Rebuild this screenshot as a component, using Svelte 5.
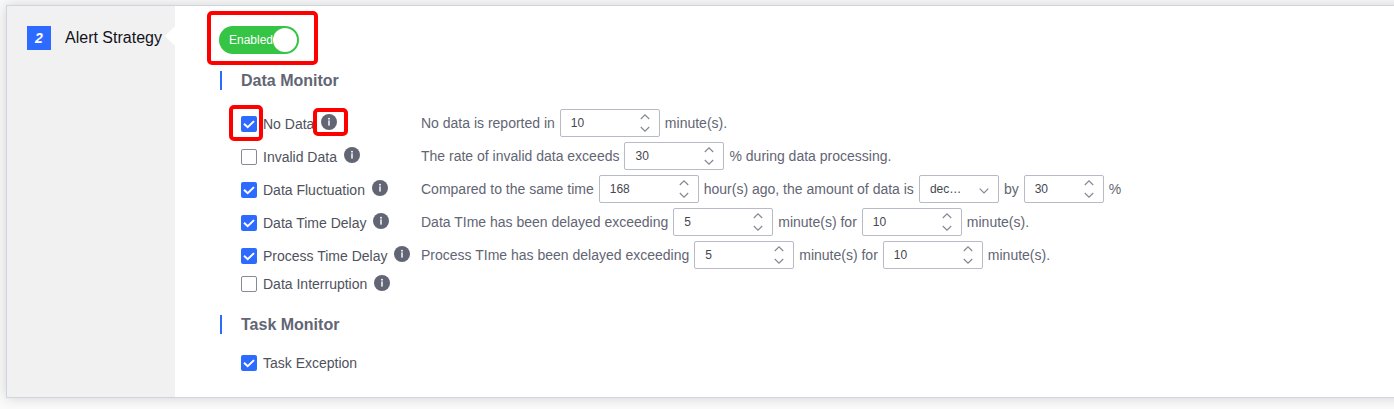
<script>
  const rows = [
    { label: 'No Data', checked: true, parts: [['t', 'No data is reported in'], ['n', '10'], ['t', 'minute(s).']] },
    { label: 'Invalid Data', checked: false, parts: [['t', 'The rate of invalid data exceeds'], ['n', '30'], ['t', '% during data processing.']] },
    {
      label: 'Data Fluctuation', checked: true,
      parts: [['t', 'Compared to the same time'], ['n', '168'], ['t', 'hour(s) ago, the amount of data is'], ['s', 'dec…'], ['t', 'by'], ['m', '30'], ['t', '%']]
    },
    { label: 'Data Time Delay', checked: true, parts: [['t', 'Data TIme has been delayed exceeding'], ['n', '5'], ['t', 'minute(s) for'], ['n', '10'], ['t', 'minute(s).']] },
    { label: 'Process Time Delay', checked: true, parts: [['t', 'Process TIme has been delayed exceeding'], ['n', '5'], ['t', 'minute(s) for'], ['n', '10'], ['t', 'minute(s).']] },
    { label: 'Data Interruption', checked: false, parts: [] }
  ];
</script>

{#snippet check(label, on, info, short)}
  <div class="check" class:short>
    <span class="box" class:on>
      {#if on}
        <svg width="16" height="16" viewBox="0 0 16 16"><path d="M3 7.7 L6.7 11.2 L13 5.1" fill="none" stroke="#fff" stroke-width="2" /></svg>
      {/if}
    </span>
    <span class="label">{label}</span>
    {#if info}
      <svg class="info" width="16" height="16" viewBox="0 0 16 16">
        <circle cx="8" cy="8" r="8" fill="#626573" />
        <rect x="7" y="3.9" width="2" height="1.6" fill="#e8e8ea" />
        <rect x="7" y="6.4" width="2" height="5.2" fill="#d4d5da" />
      </svg>
    {/if}
  </div>
{/snippet}

<main>
  <section class="card">
    <aside>
      <span class="step">2</span>
      <span class="title">Alert Strategy</span>
      <i class="notch"></i>
    </aside>
    <div class="content">
      <div class="switch"><span>Enabled</span><b></b></div>
      <h2>Data Monitor</h2>
      <div class="rows">
        {#each rows as row}
          <div class="row">
            {@render check(row.label, row.checked, true, !row.parts.length)}
            <div class="rule">
              {#each row.parts as [kind, text]}
                {#if kind === 't'}
                  <span class="text">{text}</span>
                {:else}
                  <div class="field" class:small={kind !== 'n'}>
                    <span>{text}</span>
                    {#if kind === 's'}
                      <svg class="arrow" width="10" height="6" viewBox="0 0 10 6"><path d="M.7 .7 L5 5 L9.3 .7" /></svg>
                    {:else}
                      <svg width="10" height="18" viewBox="0 0 10 18"><path d="M.8 5 L5 .9 L9.2 5 M.8 13 L5 17.1 L9.2 13" /></svg>
                    {/if}
                  </div>
                {/if}
              {/each}
            </div>
          </div>
        {/each}
      </div>
      <h2 class="task">Task Monitor</h2>
      <div class="exception">{@render check('Task Exception', true, false, false)}</div>
    </div>
  </section>
  <i class="mark toggle-mark"></i>
  <i class="mark check-mark"></i>
  <i class="mark info-mark"></i>
</main>

<style>
  :global(body) { background: #fafafa; }
  main {
    position: relative;
    box-sizing: border-box;
    width: 1394px;
    height: 409px;
    padding: 5px 0 0 6px;
    overflow: hidden;
    font-family: "Liberation Sans", Arial, sans-serif;
    font-size: 14px;
    color: #626573;
  }
  .card {
    display: flex;
    box-sizing: border-box;
    width: 1400px;
    height: 393px;
    border: 1px solid #cfd5df;
    background: #fff;
    box-shadow: 0 0 12px rgba(0, 0, 0, .16);
  }
  aside {
    position: relative;
    display: flex;
    box-sizing: border-box;
    width: 168px;
    flex: none;
    padding: 20px 0 0 20px;
    background: #f1f1f1;
  }
  .step {
    width: 24px;
    height: 24px;
    margin-right: 14px;
    background: #2d6aff;
    color: #fff;
    font: italic bold 14px/25px "Liberation Sans", Arial, sans-serif;
    text-align: center;
  }
  .title { font-size: 16px; line-height: 23px; color: #11131c; white-space: nowrap; }
  .notch {
    position: absolute;
    top: 20px;
    right: 0;
    border: solid transparent;
    border-width: 10px 10px 10px 0;
    border-right-color: #fff;
  }
  .content { padding: 20px 0 0 44px; }
  .switch {
    display: flex;
    align-items: center;
    justify-content: space-between;
    box-sizing: border-box;
    width: 80px;
    height: 28px;
    padding: 0 2px 0 10px;
    border-radius: 14px;
    background: #36c445;
    color: #fff;
    font-size: 12px;
  }
  .switch b { flex: none; width: 24px; height: 24px; border-radius: 50%; background: #fff; }
  h2 {
    height: 19px;
    margin: 17px 0 19px 1px;
    padding-left: 19px;
    border-left: 2px solid #2d6aff;
    font-size: 16px;
    line-height: 19px;
    color: #626573;
  }
  .rows { display: flex; flex-direction: column; gap: 5px; padding-left: 22px; }
  .row { display: flex; }
  .check { display: flex; align-items: center; box-sizing: border-box; width: 180px; height: 28px; padding-top: 2px; }
  .check.short { height: 20px; padding-top: 0; }
  .box { box-sizing: border-box; width: 16px; height: 16px; margin-right: 6px; border: 1px solid #878a96; border-radius: 2px; background: #fff; }
  .box.on { border: 0; background: #2d6aff; }
  .box svg { display: block; }
  .label { color: #4f525c; white-space: nowrap; line-height: 20px; }
  .info { margin: -4px 0 0 7px; }
  .short .info { margin-top: -2px; }
  .rule { display: flex; align-items: center; white-space: nowrap; }
  .text { line-height: 20px; }
  .field {
    display: flex;
    align-items: center;
    justify-content: space-between;
    box-sizing: border-box;
    width: 100px;
    height: 28px;
    margin: 0 5px;
    padding: 0 9px 0 10px;
    border: 1px solid #b8bac6;
    border-radius: 2px;
    color: #45474f;
    font-size: 12px;
  }
  .small { width: 80px; }
  .field path { fill: none; stroke: #858894; stroke-width: 1.2; }
  .arrow { margin-top: 3px; }
  h2.task { margin: 21px 0 14px 1px; }
  .exception { padding-left: 22px; }
  .mark { position: absolute; box-sizing: border-box; border: 4px solid #fe0000; border-radius: 5px; }
  .toggle-mark { left: 207px; top: 11px; width: 111px; height: 54px; }
  .check-mark { left: 229px; top: 105px; width: 34px; height: 36px; }
  .info-mark { left: 313px; top: 108px; width: 35px; height: 28px; }
</style>
